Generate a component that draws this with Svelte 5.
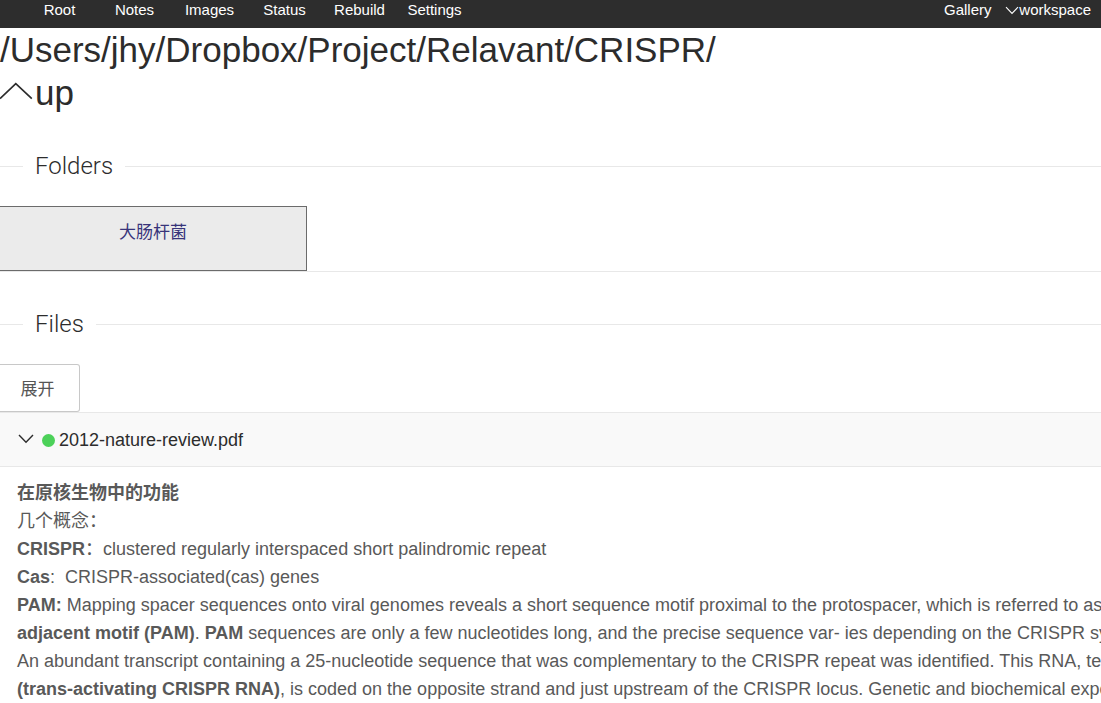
<script>
  const links = ['Root', 'Notes', 'Images', 'Status', 'Rebuild', 'Settings'];
  let open = $state(true);
</script>

<nav class="bar">
  {#each links as label}
    <a href="#{label.toLowerCase()}">{label}</a>
  {/each}
  <span class="space"></span>
  <a href="#gallery">Gallery</a>
  <button class="workspace" type="button">
    <svg width="14" height="9" viewBox="0 0 14 9" aria-hidden="true"><path d="M1 1.2 7 7.4 13 1.2" fill="none" stroke="currentColor" stroke-width="1.1" /></svg>workspace
  </button>
</nav>

<main>
  <h1>
    <span>/Users/jhy/Dropbox/Project/Relavant/CRISPR/</span>
    <a class="up" href="#up">
      <svg width="33" height="22" viewBox="0 0 33 22" aria-hidden="true"><path d="M0 16.6 15.8 1.6 31.8 16.6" fill="none" stroke="currentColor" stroke-width="1.7" /></svg>up
    </a>
  </h1>

  <section class="folders">
    <h2>Folders</h2>
    <div class="cards"><a class="card" href="#folder">大肠杆菌</a></div>
  </section>

  <section class="files">
    <h2>Files</h2>
    <button class="expand" type="button" onclick={() => (open = !open)}>展开</button>
    <article>
      <header>
        <svg width="16" height="12" viewBox="0 0 16 12" aria-hidden="true"><path d="M1 1 8 8.2 15 1" fill="none" stroke="currentColor" stroke-width="1.4" /></svg>
        <i class="dot"></i>
        <a href="#file">2012-nature-review.pdf</a>
      </header>
      {#if open}
        <div class="notes">
          <p><b>在原核生物中的功能</b></p>
          <p>几个概念：</p>
          <p><b>CRISPR</b>：clustered regularly interspaced short palindromic repeat</p>
          <p><b>Cas</b>:&nbsp; CRISPR-associated(cas) genes</p>
          <p><b>PAM:</b> Mapping spacer sequences onto viral genomes reveals a short sequence motif proximal to the protospacer, which is referred to as th</p>
          <p><b>adjacent motif (PAM)</b>. <b>PAM</b> sequences are only a few nucleotides long, and the precise sequence var- ies depending on the CRISPR syste</p>
          <p>An abundant transcript containing a 25-nucleotide sequence that was complementary to the CRISPR repeat was identified. This RNA, term</p>
          <p><b>(trans-activating CRISPR RNA)</b>, is coded on the opposite strand and just upstream of the CRISPR locus. Genetic and biochemical experim</p>
        </div>
      {/if}
    </article>
  </section>
</main>

<style>
  :global(body) {
    margin: 0;
    overflow: hidden;
    background: #fff;
    color: #2c2c2c;
    font: 18px/28px "Liberation Sans", "Noto Sans CJK SC", sans-serif;
  }
  a { color: inherit; text-decoration: none; }
  button { font: inherit; cursor: pointer; }
  .bar {
    display: flex;
    height: 28px;
    padding: 0 10px 0 22px;
    background: #2d2d2d;
    color: #fff;
    font-size: 15px;
    line-height: 20px;
  }
  .bar a { width: 75px; text-align: center; }
  .space { flex: 1; }
  .workspace {
    display: flex;
    align-items: center;
    height: 20px;
    padding: 0;
    border: 0;
    background: none;
    color: inherit;
  }
  h1 {
    margin: 0;
    font-size: 35px;
    font-weight: 400;
    line-height: 43px;
    white-space: nowrap;
  }
  h1 span { display: block; }
  .up { display: flex; align-items: center; gap: 2px; }
  h2 {
    display: flex;
    align-items: center;
    gap: 12px;
    margin: 0;
    font: 300 24px/40px Roboto, sans-serif;
  }
  h2::before, h2::after { content: ""; height: 1px; background: #e8e8e8; }
  h2::before { width: 23px; }
  h2::after { flex: 1; }
  .folders { padding-top: 32px; }
  .files { padding-top: 32px; }
  .cards { display: flex; margin-top: 20px; border-bottom: 1px solid #e8e8e8; }
  .card {
    box-sizing: border-box;
    width: 307px;
    height: 65px;
    padding-top: 12px;
    border: 1px solid #6b6b6b;
    border-left: 0;
    background: #ebebeb;
    color: #38347a;
    font-size: 17px;
    text-align: center;
  }
  .expand {
    display: block;
    box-sizing: border-box;
    width: 80px;
    height: 48px;
    margin-top: 20px;
    padding: 4px 4px 0 0;
    border: 1px solid #c8c8c8;
    border-left: 0;
    border-radius: 0 3px 3px 0;
    background: #fff;
    color: #555;
    font-size: 17px;
  }
  header {
    display: flex;
    align-items: center;
    height: 53px;
    padding-left: 18px;
    border: solid #e8e8e8;
    border-width: 1px 0;
    background: #f9f9f9;
  }
  .dot { width: 13px; height: 13px; margin: 2px 4px 0 8px; border-radius: 50%; background: #4cd159; }
  .notes { padding: 12px 17px; color: #595959; white-space: nowrap; }
  p { margin: 0; }
</style>
